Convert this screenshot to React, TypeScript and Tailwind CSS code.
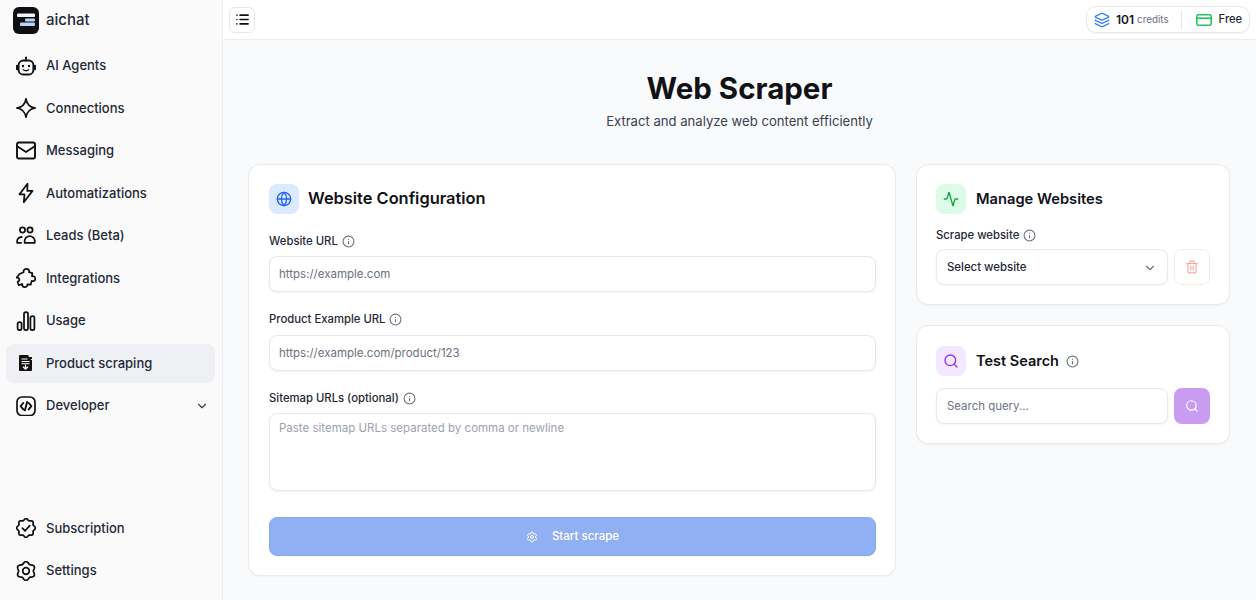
import React from 'react';
import { Activity, ChevronDown, Globe, Info, Layers, List, Search, Settings, Trash2 } from 'lucide-react';

// scalloped outline used by the subscription badge and the settings gear
const wavyPath = (lobes: number, r: number, amp: number) => {
    const pts: string[] = [];
    for (let i = 0; i < 96; i++) {
        const a = (i / 96) * Math.PI * 2;
        const d = r + amp * Math.cos(lobes * a);
        pts.push(`${(10 + d * Math.sin(a)).toFixed(2)} ${(10 - d * Math.cos(a)).toFixed(2)}`);
    }
    return `M${pts.join('L')}Z`;
};

const Nav = ({ children }: { children: React.ReactNode }) => (
    <svg width="20" height="20" viewBox="0 0 20 20" fill="none" stroke="#111" strokeWidth="1.75" strokeLinecap="round" strokeLinejoin="round" className="shrink-0">
        {children}
    </svg>
);

const BotIcon = () => (
    <Nav>
        <rect x="2.6" y="4.5" width="14.8" height="14" rx="4.6" strokeWidth="1.9" />
        <path d="M10 2v2.5" />
        <circle cx="10" cy="1.4" r="1" fill="#111" stroke="none" />
        <rect x="0" y="8.8" width="2.2" height="5.4" rx="1" fill="#111" stroke="none" />
        <rect x="17.8" y="8.8" width="2.2" height="5.4" rx="1" fill="#111" stroke="none" />
        <circle cx="7" cy="10" r="1.2" fill="#111" stroke="none" />
        <circle cx="13" cy="10" r="1.2" fill="#111" stroke="none" />
        <path d="M7.3 13.7c1.6 1.2 3.8 1.2 5.4 0" strokeWidth="1.3" />
    </Nav>
);

const SparkIcon = () => (
    <Nav>
        <path d="M10 .8C10.8 6 14 9.2 19.2 10 14 10.8 10.8 14 10 19.2 9.2 14 6 10.8.8 10 6 9.2 9.2 6 10 .8Z" />
    </Nav>
);

const MailIcon = () => (
    <Nav>
        <rect x="1" y="1.5" width="18" height="16" rx="1.8" strokeWidth="1.9" />
        <path d="M1.2 5.2 10 11l8.8-5.8" strokeWidth="1.8" />
    </Nav>
);

const BoltIcon = () => (
    <Nav>
        <path d="M11.5.8 3.5 11.3h5L7.8 19.2l8.7-11.3h-5.2z" />
    </Nav>
);

const LeadsIcon = () => (
    <Nav>
        <circle cx="6.5" cy="4" r="2.6" />
        <circle cx="14" cy="4" r="2.6" />
        <path d="M8.6 16.8h10.2v-1.6a5.1 5.1 0 0 0-10.2 0z" />
        <path d="M5.2 16.8H1.1v-1.2c0-2.6 1.8-4.5 4.7-4.8" />
    </Nav>
);

const PuzzleIcon = () => (
    <Nav>
        <path d="M7.6 4.2C7.1 2.4 8.6.9 10.4.9c1.9 0 3.2 1.6 2.6 3.3l3.3 1-.3 3.2c1.7-.7 3.3.6 3.3 2.3 0 1.9-1.8 3.1-3.6 2.2l-1 3.8-3.4-.4c.4 1.7-1 2.9-2.7 2.8-1.7-.1-2.8-1.5-2.3-3l-3.6 1-1.1-3.3c1.7-.5 2.2-2.2 1.2-3.4-.7-.8-1.6-.9-2.2-.7L3.5 6z" />
    </Nav>
);

const UsageIcon = () => (
    <Nav>
        <rect x="1.6" y="11" width="4" height="8.2" rx="2" />
        <rect x="8" y="1" width="4" height="18.2" rx="2" />
        <rect x="14.4" y="5" width="4" height="14.2" rx="2" />
    </Nav>
);

const ScrapeIcon = () => (
    <svg width="14" height="17" viewBox="0 0 14 17" className="shrink-0">
        <path d="M0 1a1 1 0 0 1 1-1h8.5v2H13v2h-1v1h1v10a1 1 0 0 1-1 1H1a1 1 0 0 1-1-1z" fill="#111" />
        <path d="M2.5 4h6M2.5 6.5h8M2.5 8.7h8" stroke="#fff" strokeWidth="1" />
        <path d="M6.5 9.5v4.5M4 11.8l2.5 2.4L9 11.8" stroke="#fff" strokeWidth="1.3" fill="none" />
    </svg>
);

const DevIcon = () => (
    <Nav>
        <rect x="1" y="1" width="18" height="18.5" rx="5" strokeWidth="1.7" />
        <path d="M7.3 7 4.6 10.2l2.7 3.2M12.7 7l2.7 3.2-2.7 3.2M11.1 6 8.9 14.4" strokeWidth="1.9" />
    </Nav>
);

const BadgeIcon = () => (
    <Nav>
        <path d={wavyPath(8, 8.6, 0.8)} />
        <path d="M6.4 10.2 9 12.8l4.8-5.2" strokeWidth="1.7" />
    </Nav>
);

const GearIcon = () => (
    <Nav>
        <path d={wavyPath(6, 8.4, 1)} />
        <circle cx="10" cy="10" r="3.3" />
    </Nav>
);

const Logo = () => (
    <svg width="26" height="27" viewBox="0 0 26 27" className="shrink-0">
        <rect width="26" height="27" rx="6" fill="#0f1014" />
        <rect x="4" y="6.5" width="18" height="3.5" rx="1" fill="#f3f4f6" />
        <rect x="12" y="11.5" width="10" height="3" rx="1" fill="#bcd3f5" />
        <rect x="7" y="15.5" width="15" height="3.5" rx="1" fill="#bcd3f5" />
    </svg>
);

const CardIcon = () => (
    <svg width="16" height="12" viewBox="0 0 16 12" fill="none" stroke="#22c55e" strokeWidth="1.6" className="shrink-0">
        <rect x="0.8" y="0.8" width="14.4" height="10.4" rx="1.5" />
        <path d="M.8 4.2h14.4" />
    </svg>
);

const NavItem = ({ icon, label, active, chevron }: { icon: React.ReactNode; label: string; active?: boolean; chevron?: boolean }) => (
    <div className={`flex items-center h-[38.5px] pl-[10px] pr-[6px] rounded-lg ${active ? 'bg-[#eef0f3]' : ''}`}>
        <div className="w-[20px] flex justify-center shrink-0">{icon}</div>
        <span className="ml-[10px] text-[13px] font-medium text-[#1f2937]">{label}</span>
        {chevron && <ChevronDown size={14} color="#374151" className="ml-auto" />}
    </div>
);

const Label = ({ children }: { children: React.ReactNode }) => (
    <div className="flex items-center gap-[4px] text-[11.3px] font-medium text-[#1f2937] leading-5">
        {children}
        <Info size={13} color="#6b7280" />
    </div>
);

const IconBox = ({ bg, children }: { bg: string; children: React.ReactNode }) => (
    <div className={`w-[30px] h-[30px] rounded-lg flex items-center justify-center shrink-0 ${bg}`}>{children}</div>
);

const Field = ({ placeholder }: { placeholder: string }) => (
    <div className="h-9 flex items-center px-[9px] pt-[2px] bg-white border border-[#e5e7eb] rounded-lg shadow-[0_1px_2px_rgba(0,0,0,0.05)] text-[11.5px] text-[#6b7280]">
        {placeholder}
    </div>
);

const App = () => {
    return (
        <div className="flex h-[600px] w-[1256px] overflow-hidden bg-[#f9fafb] font-['Inter',sans-serif]">
            <aside className="w-[223px] shrink-0 bg-[#fafafa] border-r border-[#eceef1] flex flex-col pl-[6px] pr-[7px]">
                <div className="flex items-center gap-[7px] h-[39px] pl-[7px] mt-[1px]">
                    <Logo />
                    <span className="text-[15px] font-medium text-[#1f2937]">aichat</span>
                </div>
                <nav className="flex flex-col gap-[4px] mt-[6.5px]">
                    <NavItem icon={<BotIcon />} label="AI Agents" />
                    <NavItem icon={<SparkIcon />} label="Connections" />
                    <NavItem icon={<MailIcon />} label="Messaging" />
                    <NavItem icon={<BoltIcon />} label="Automatizations" />
                    <NavItem icon={<LeadsIcon />} label="Leads (Beta)" />
                    <NavItem icon={<PuzzleIcon />} label="Integrations" />
                    <NavItem icon={<UsageIcon />} label="Usage" />
                    <NavItem icon={<ScrapeIcon />} label="Product scraping" active />
                    <NavItem icon={<DevIcon />} label="Developer" chevron />
                </nav>
                <div className="mt-auto flex flex-col gap-[4px] mb-[10px]">
                    <NavItem icon={<BadgeIcon />} label="Subscription" />
                    <NavItem icon={<GearIcon />} label="Settings" />
                </div>
            </aside>

            <div className="flex-1 flex flex-col min-w-0">
                <header className="h-10 shrink-0 bg-white border-b border-[#eceef1] flex items-center justify-between pl-[6px] pr-[6px]">
                    <div className="w-[26px] h-[26px] border border-[#e5e7eb] rounded-md flex items-center justify-center">
                        <List size={15} color="#111" strokeWidth={2.5} />
                    </div>
                    <div className="h-[27px] w-[164px] border border-[#e5e7eb] rounded-[10px] flex items-center text-xs shadow-[0_1px_2px_rgba(0,0,0,0.04)]">
                        <Layers size={16} color="#3b82f6" strokeWidth={2} className="ml-[7px]" />
                        <span className="ml-[6px] font-semibold text-[#111827]">101</span>
                        <span className="ml-[3px] text-[9.8px] text-[#6b7280]">credits</span>
                        <div className="ml-[12px] w-px h-[20px] bg-[#e5e7eb]" />
                        <div className="ml-[14px]"><CardIcon /></div>
                        <span className="ml-[7px] text-[11.2px] font-medium text-[#1f2937]">Free</span>
                    </div>
                </header>

                <main className="flex-1 px-[25px]">
                    <div className="text-center pt-[28px]">
                        <h1 className="text-[29.5px] font-bold leading-[40px] text-[#111218]">Web Scraper</h1>
                        <p className="mt-[3px] text-[13.1px] leading-5 text-[#374151]">Extract and analyze web content efficiently</p>
                    </div>

                    <div className="grid grid-cols-[648px_314px] gap-[20px] mt-[33px]">
                        <section className="bg-white border border-[#e8eaee] rounded-xl pt-[19px] pb-[19px] pl-[20px] pr-[19px] shadow-[0_1px_2px_rgba(0,0,0,0.04)]">
                            <div className="flex items-center gap-[9px]">
                                <IconBox bg="bg-[#dbeafe]"><Globe size={16} color="#2563eb" /></IconBox>
                                <h2 className="text-[16.4px] font-semibold text-[#111218] pb-[1px]">Website Configuration</h2>
                            </div>
                            <div className="mt-[17px]"><Label>Website URL</Label></div>
                            <div className="mt-[5px]"><Field placeholder="https://example.com" /></div>
                            <div className="mt-[17px]"><Label>Product Example URL</Label></div>
                            <div className="mt-[6px]"><Field placeholder="https://example.com/product/123" /></div>
                            <div className="mt-[17px]"><Label>Sitemap URLs (optional)</Label></div>
                            <div className="mt-[5px] h-[78px] px-[9px] py-[6px] bg-white border border-[#e5e7eb] rounded-lg shadow-[0_1px_2px_rgba(0,0,0,0.05)] text-[11.5px] text-[#9ca3af]">
                                Paste sitemap URLs separated by comma or newline
                            </div>
                            <div className="mt-[26px] h-[39px] rounded-lg bg-[#91aff3] border border-[#86a8f5] flex items-center justify-center gap-[14px] text-[11.5px] font-medium text-white">
                                <Settings size={12} color="#fff" />
                                Start scrape
                            </div>
                        </section>

                        <div className="flex flex-col gap-[20px] items-stretch self-start">
                            <section className="bg-white border border-[#e8eaee] rounded-xl p-[19px] shadow-[0_1px_2px_rgba(0,0,0,0.04)]">
                                <div className="flex items-center gap-[10px]">
                                    <IconBox bg="bg-[#dcfce7]"><Activity size={16} color="#16a34a" /></IconBox>
                                    <h2 className="text-[14.7px] font-semibold text-[#111218]">Manage Websites</h2>
                                </div>
                                <div className="mt-[11px]"><Label>Scrape website</Label></div>
                                <div className="mt-[4px] flex gap-[6px]">
                                    <div className="w-[232px] h-9 flex items-center justify-between px-[10px] pt-[2px] bg-white border border-[#e5e7eb] rounded-lg shadow-[0_1px_2px_rgba(0,0,0,0.05)] text-[11.4px] font-medium text-[#1f2937]">
                                        Select website
                                        <ChevronDown size={14} color="#6b7280" />
                                    </div>
                                    <div className="w-9 h-9 flex items-center justify-center border border-[#fde8e8] rounded-lg">
                                        <Trash2 size={14} color="#fca5a5" />
                                    </div>
                                </div>
                            </section>
                            <section className="bg-white border border-[#e8eaee] rounded-xl p-[19px] pt-[20px] shadow-[0_1px_2px_rgba(0,0,0,0.04)]">
                                <div className="flex items-center gap-[10px]">
                                    <IconBox bg="bg-[#f3e8ff]"><Search size={16} color="#9333ea" /></IconBox>
                                    <div className="flex items-center gap-[7px]">
                                        <h2 className="text-[14.5px] font-semibold text-[#111218]">Test Search</h2>
                                        <Info size={13} color="#6b7280" />
                                    </div>
                                </div>
                                <div className="mt-[12px] flex gap-[6px]">
                                    <div className="w-[232px] h-9 flex items-center px-[10px] pt-[2px] bg-white border border-[#e5e7eb] rounded-lg shadow-[0_1px_2px_rgba(0,0,0,0.05)] text-[11.45px] text-[#6b7280]">
                                        Search query...
                                    </div>
                                    <div className="w-9 h-9 flex items-center justify-center rounded-lg bg-[#c99cf2]">
                                        <Search size={14} color="#fff" />
                                    </div>
                                </div>
                            </section>
                        </div>
                    </div>
                </main>
            </div>
        </div>
    );
};

export default App;
